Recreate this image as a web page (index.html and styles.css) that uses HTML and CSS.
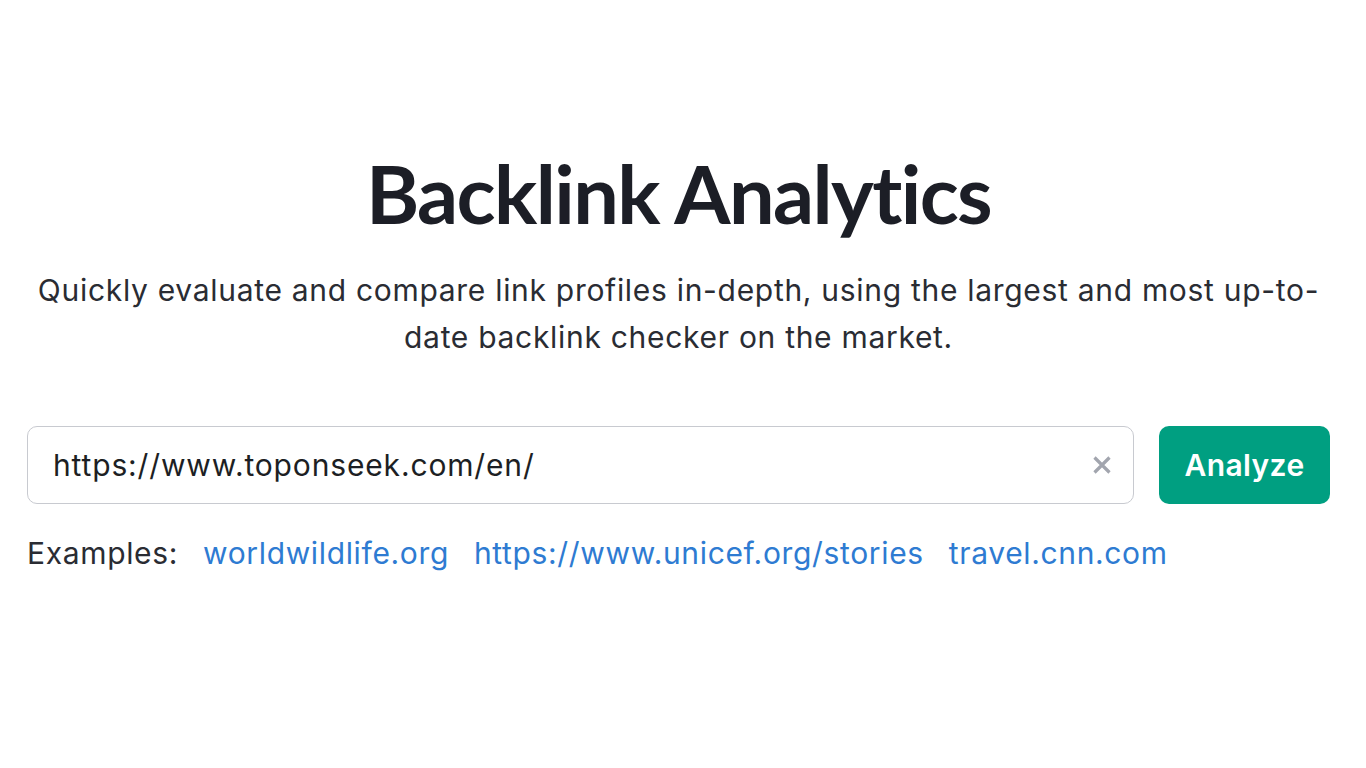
FILE: index.html
```html
<!DOCTYPE html>
<html lang="en">

<head>
    <meta charset="UTF-8">
    <meta name="viewport" content="width=device-width, initial-scale=1.0">
    <title>Backlink Analytics</title>
    <link rel="stylesheet" href="styles.css">
</head>

<body>
    <div class="backlink-container">
        <h1>Backlink Analytics</h1>
        <p class="subtitle">Quickly evaluate and compare link profiles in-depth, using the largest and most up-to-date backlink checker on the market.</p>
        <form class="search-form">
            <div class="input-container">
                <input type="text" id="dominio" name="dominio" value="https://www.toponseek.com/en/">
                <button type="button" class="clear-btn" aria-label="Clear">
                    <svg width="20" height="20" viewBox="0 0 20 20">
                        <path d="M2.5 2.5 L17.5 17.5 M17.5 2.5 L2.5 17.5" stroke="#a2a5ae" stroke-width="3.2" />
                    </svg>
                </button>
            </div>
            <button type="submit" class="analyze-btn">Analyze</button>
        </form>
        <div class="examples">
            <span>Examples:</span>
            <a href="#">worldwildlife.org</a>
            <a href="#">https://www.unicef.org/stories</a>
            <a href="#">travel.cnn.com</a>
        </div>
    </div>
</body>

</html>
```

FILE: styles.css
```css
body {
    font-family: Inter, 'Noto Sans', sans-serif;
    margin: 0;
    background-color: #fff;
    color: #1d1f24;
}

.backlink-container {
    width: 1303px;
    margin-left: 27px;
    padding-top: 147px;
    text-align: center;
}

.backlink-container h1 {
    font-family: Lato, Inter, sans-serif;
    font-size: 81px;
    font-weight: 700;
    letter-spacing: -1.6px;
    font-variant-ligatures: none;
    color: #1c1e26;
    margin: 0;
    line-height: 92px;
}

.subtitle {
    font-size: 30px;
    letter-spacing: 0.7px;
    line-height: 47px;
    color: #2a2c33;
    margin: 28px 0 0;
}

.search-form {
    display: flex;
    gap: 25px;
    margin-top: 65px;
}

.input-container {
    flex: 1;
    display: flex;
    align-items: center;
    border: 1px solid #c8cad0;
    border-radius: 10px;
    height: 76px;
    padding: 0 21px 0 25px;
}

.input-container input {
    flex: 1;
    border: none;
    outline: none;
    font-family: inherit;
    font-size: 30px;
    letter-spacing: 0.85px;
    color: #1d1f24;
    padding: 0;
}

.clear-btn {
    background: none;
    border: none;
    padding: 0;
    display: flex;
    cursor: pointer;
}

.analyze-btn {
    background-color: #009f81;
    color: #fff;
    border: none;
    border-radius: 10px;
    width: 171px;
    height: 78px;
    font-family: inherit;
    font-size: 30px;
    font-weight: 600;
    letter-spacing: 0.4px;
    cursor: pointer;
}

.examples {
    display: flex;
    gap: 25px;
    margin-top: 31px;
    font-size: 30px;
    letter-spacing: 0.65px;
    color: #2a2c33;
}

.examples a {
    color: #2e7bd2;
    text-decoration: none;
}
```
